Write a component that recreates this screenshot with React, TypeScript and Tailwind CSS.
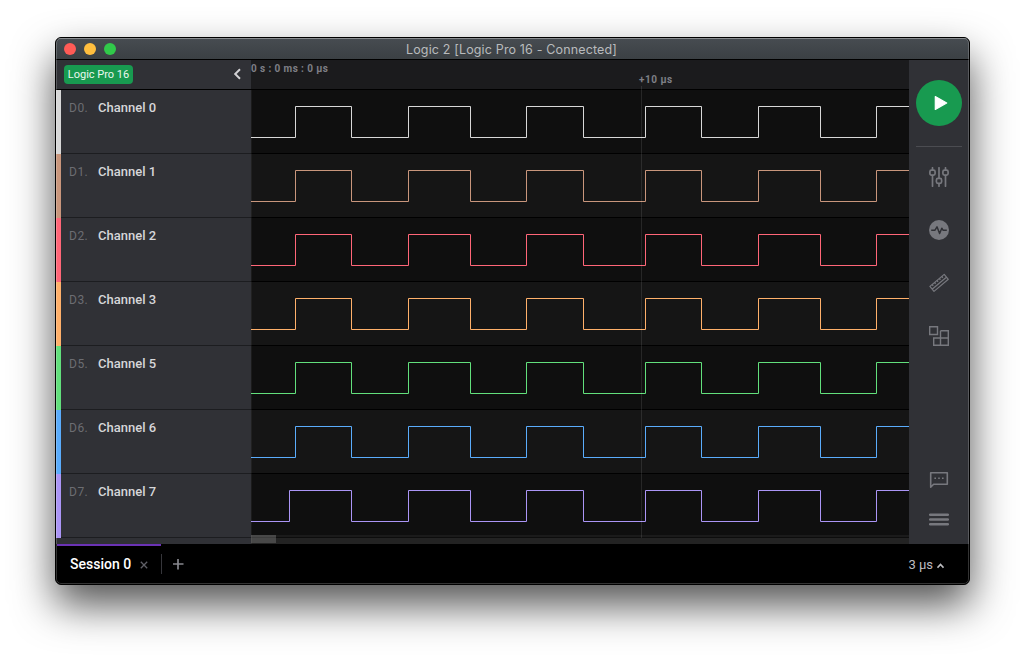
import React from "react";

type Channel = { id: string; name: string; color: string; start: number };

const channels: Channel[] = [
  { id: "D0.", name: "Channel 0", color: "#d8d8d8", start: 44.5 },
  { id: "D1.", name: "Channel 1", color: "#c9967c", start: 44.5 },
  { id: "D2.", name: "Channel 2", color: "#ff6678", start: 44.5 },
  { id: "D3.", name: "Channel 3", color: "#ffb06a", start: 44.5 },
  { id: "D5.", name: "Channel 5", color: "#62e07c", start: 44.5 },
  { id: "D6.", name: "Channel 6", color: "#5aacfc", start: 44.5 },
  { id: "D7.", name: "Channel 7", color: "#ab95f6", start: 38.5 },
];

const edges = [100.5, 157.5, 219.5, 275.5, 332.5, 394.5, 450.5, 507.5, 569.5, 625.5];

function wavePath(start: number) {
  let high = false;
  let d = "M0 47.5";
  for (const x of [start, ...edges]) {
    high = !high;
    d += `H${x}V${high ? 16.5 : 47.5}`;
  }
  return d + "H658";
}

function TitleBar() {
  return (
    <div className="grid h-[22px] shrink-0 grid-cols-[100px_1fr_100px] items-center border-b border-black bg-linear-to-b from-[#474c51] to-[#3b4044] shadow-[inset_0_1px_0_#6c7073]">
      <div className="flex gap-2 pl-2">
        <span className="size-3 rounded-full bg-[#ff5b56]" />
        <span className="size-3 rounded-full bg-[#ffbe3e]" />
        <span className="size-3 rounded-full bg-[#31c94a]" />
      </div>
      <div className="whitespace-nowrap pr-[2px] pt-[3px] text-center font-['Inter',sans-serif] text-[12.5px] leading-[18px] tracking-[0.15px] text-[#b9bbbd]">
        Logic 2 [Logic Pro 16 - Connected]
      </div>
    </div>
  );
}

function Sidebar() {
  return (
    <div className="flex w-[195px] shrink-0 flex-col bg-[#303136]">
      <div className="flex h-[30px] items-center justify-between border-b border-black pl-2 pr-[9px]">
        <span className="flex h-[19px] w-[69px] items-center justify-center whitespace-nowrap rounded bg-[#189a50] pt-[2px] text-[11px] text-[#eaf7ef]">
          Logic Pro 16
        </span>
        <svg width="9" height="12" viewBox="0 0 9 12" fill="none" stroke="#d0d0d3" strokeWidth="2" className="-mt-px">
          <path d="M7 1.2L2.2 6L7 10.8" />
        </svg>
      </div>
      {channels.map((c) => (
        <div key={c.id} className="flex h-16">
          <span className="w-[5px]" style={{ backgroundColor: c.color }} />
          <div className="flex flex-1 border-b border-[#1c1d20] pl-2 pt-[9px] leading-[18px]">
            <span className="w-[29px] text-[12px] tracking-[0.5px] text-[#6c6d72]">{c.id}</span>
            <span className="text-[13px] font-medium text-[#d6d6d9]">{c.name}</span>
          </div>
        </div>
      ))}
      <div className="flex-1" />
    </div>
  );
}

function Plot() {
  return (
    <div className="relative flex w-[658px] shrink-0 flex-col bg-[#0f0f0f]">
      <div className="h-[30px] border-b border-black bg-[#1b1b1d] text-[10px] font-bold leading-3 text-[#7e7f86]">
        <div className="pt-[3px] tracking-[0.4px]">0 s : 0 ms : 0 µs</div>
        <div className="-mt-px pl-[388px] tracking-[0.5px]">+10 µs</div>
      </div>
      {channels.map((c, i) => (
        <div key={c.id} className={`h-16 border-b border-black ${i % 2 ? "bg-[#151515]" : "bg-[#0f0f0f]"}`}>
          <svg width="658" height="63" viewBox="0 0 658 63" fill="none" stroke={c.color}>
            <path d={wavePath(c.start)} />
          </svg>
        </div>
      ))}
      <div className="flex-1 bg-[#232323]">
        <div className="h-[5px] w-[25px] bg-[#484848]" />
      </div>
      <span className="absolute left-0 top-[30px] h-[454px] w-px bg-white/5" />
      <span className="absolute left-0 top-[475px] h-[3px] w-[658px] bg-white/5" />
      <span className="absolute left-0 top-[475px] h-[3px] w-[25px] bg-white/20" />
      <span className="absolute left-[390px] top-[26px] h-[452px] w-px bg-white/10" />
    </div>
  );
}

function ToolRail() {
  return (
    <div className="flex w-[60px] shrink-0 flex-col items-center bg-[#303136] text-[#77787e]">
      <div className="mt-5 flex size-[46px] items-center justify-center rounded-full bg-[#189a50]">
        <svg width="14" height="16" viewBox="0 0 14 16" className="ml-[3px]">
          <path d="M1.3 1.6L12.7 8L1.3 14.4Z" fill="#fff" stroke="#fff" strokeWidth="1.2" strokeLinejoin="round" />
        </svg>
      </div>
      <div className="mt-5 h-px w-[46px] bg-[#4b4c51]" />
      <svg width="20" height="20" viewBox="0 0 20 20" className="mt-5" fill="none" stroke="currentColor" strokeWidth="1.7" strokeLinecap="round">
        <path d="M3.5 .8V3M3.5 8.5V19.2M10 .8V11.2M10 16.5V19.2M16.5 .8V3M16.5 8.5V19.2" />
        <rect x=".9" y="3.2" width="5.2" height="5" rx="1.6" />
        <rect x="7.4" y="11.3" width="5.2" height="5" rx="1.6" />
        <rect x="13.9" y="3.2" width="5.2" height="5" rx="1.6" />
      </svg>
      <svg width="20" height="20" viewBox="0 0 20 20" className="mt-[33px]">
        <circle cx="10" cy="10" r="10" fill="currentColor" />
        <path d="M2.2 10.2H6L8 6.8L10.6 13.5L12.8 8.2L14 10.2H17.8" fill="none" stroke="#303136" strokeWidth="1.5" strokeLinejoin="round" />
      </svg>
      <svg width="20" height="20" viewBox="0 0 20 20" className="mt-[33px]" fill="none" stroke="currentColor" strokeWidth="1.2" strokeLinejoin="round">
        <path d="M.9 13.4L15.2 1.4L19.3 6.3L5 18.4ZM3.4 16L17.4 4.2" />
        <path d="M3.2 11.5L4.2 12.8M5.6 9.5L6.6 10.8M8 7.5L9 8.8M10.4 5.5L11.4 6.8M12.8 3.5L13.8 4.8" strokeWidth="1.4" />
      </svg>
      <svg width="20" height="20" viewBox="0 0 20 20" className="mt-[33px]" fill="none" stroke="currentColor" strokeWidth="1.4">
        <path d="M.7 .7H8.5V8.5H.7ZM11.5 4.7H19.3V19.3H4.7V12H19.3M11.5 4.7V19.3" />
      </svg>
      <svg width="20" height="18" viewBox="0 0 20 18" className="mb-6 mt-auto" fill="none" stroke="currentColor" strokeWidth="1.6" strokeLinejoin="round">
        <path d="M1.7 16.2V1.7H18.3V13.3H4.6Z" />
        <path d="M5.4 7.3H7M9.2 7.3H10.8M13 7.3H14.6" />
      </svg>
      <svg width="20" height="13" viewBox="0 0 20 13" className="mb-[18px]" stroke="currentColor" strokeWidth="2.5" strokeLinecap="round">
        <path d="M1.2 1.7H18.8M1.2 6.5H18.8M1.2 11.3H18.8" />
      </svg>
    </div>
  );
}

function SessionBar() {
  return (
    <div className="flex h-10 shrink-0 bg-black pl-px">
      <div className="flex w-[104px] items-center border-t-2 border-[#6b33b5] pl-[13px]">
        <span className="-mt-[3px] whitespace-nowrap text-sm font-medium text-white">Session 0</span>
        <svg width="8" height="8" viewBox="0 0 8 8" className="-mt-px ml-[9px]" stroke="#606067" strokeWidth="1.3">
          <path d="M.8 .8L7.2 7.2M7.2 .8L.8 7.2" />
        </svg>
      </div>
      <div className="mt-[10px] h-5 w-px bg-[#36363b]" />
      <svg width="11" height="11" viewBox="0 0 11 11" className="ml-[11px] mt-[15px]" stroke="#86878d" strokeWidth="1.7">
        <path d="M0 5H10.5M5 0V10.5" />
      </svg>
      <div className="ml-auto mr-[25px] flex items-center gap-1 pt-0.5 text-[13px] text-[#bdbdc1]">
        3 µs
        <svg width="7" height="6" viewBox="0 0 7 6" fill="none" stroke="currentColor" strokeWidth="1.6" className="mt-0.5">
          <path d="M.5 4.7L3.5 1.5L6.5 4.7" />
        </svg>
      </div>
    </div>
  );
}

export default function App() {
  return (
    <div className="h-[658px] w-[1025px] overflow-hidden bg-white pl-[55px] pt-[37px] font-['Roboto',sans-serif]">
      <div className="h-[548px] w-[915px] rounded-[6px] shadow-[0_20px_42px_rgba(0,0,0,0.68)]">
        <div className="relative flex h-full flex-col overflow-hidden rounded-[6px] border border-black bg-black">
          <TitleBar />
          <div className="flex min-h-0 flex-1">
            <Sidebar />
            <Plot />
            <ToolRail />
          </div>
          <SessionBar />
          <div className="pointer-events-none absolute inset-0 rounded-[5px] border border-white/20" />
        </div>
      </div>
    </div>
  );
}
